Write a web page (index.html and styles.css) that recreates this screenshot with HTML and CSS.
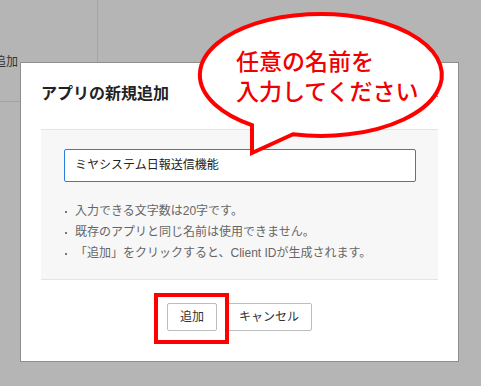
FILE: index.html
```html
<!DOCTYPE html>
<html lang="ja">
<head>
<meta charset="utf-8">
<title>アプリの新規追加</title>
<link rel="stylesheet" href="styles.css">
</head>
<body>
<div class="page">
  <div class="cell cell-side"><span class="side-label">追加</span></div>
  <div class="cell cell-main"></div>
  <div class="cell"></div>
  <div class="cell"></div>
</div>

<div class="modal">
  <div class="modal-header">
    <h1 class="modal-title">アプリの新規追加</h1>
    <span class="modal-close">×</span>
  </div>
  <div class="modal-panel">
    <div class="field">ミヤシステム日報送信機能</div>
    <ul class="notes">
      <li>入力できる文字数は20字です。</li>
      <li>既存のアプリと同じ名前は使用できません。</li>
      <li>「追加」をクリックすると、Client IDが生成されます。</li>
    </ul>
  </div>
  <div class="modal-footer">
    <span class="btn-wrap highlighted"><button class="btn">追加</button></span>
    <button class="btn">キャンセル</button>
  </div>
</div>

<svg class="bubble" width="260" height="160" viewBox="0 0 260 160">
  <path d="M 103 134.3 A 121 61 0 1 0 62 125.1 L 62 153 Z" fill="#fff" stroke="#ff0000" stroke-width="4" stroke-linejoin="miter"/>
</svg>
<div class="bubble-text">任意の名前を<br>入力してください</div>
</body>
</html>
```

FILE: styles.css
```css
* { box-sizing: border-box; }

html, body {
  margin: 0;
  padding: 0;
}

body {
  width: 481px;
  height: 386px;
  overflow: hidden;
  background: #b5b5b5;
  font-family: "Liberation Sans", "Noto Sans CJK JP", sans-serif;
  color: #222;
  position: relative;
}

.page {
  display: grid;
  grid-template-columns: 98px 1fr;
  grid-template-rows: 102px 1fr;
  height: 386px;
}

.cell-side {
  border-right: 1px solid #a4a4a4;
  border-bottom: 1px solid #a4a4a4;
  padding-top: 53px;
  font-size: 12px;
  line-height: 18px;
  color: #333;
  overflow: hidden;
}

.side-label {
  display: inline-block;
  margin-left: -6px;
}

.modal {
  position: absolute;
  left: 20px;
  top: 62px;
  width: 439px;
  height: 300px;
  background: #fff;
  border: 1px solid #8e8e8e;
  display: flex;
  flex-direction: column;
}

.modal-header {
  display: flex;
  justify-content: space-between;
  align-items: flex-start;
  padding: 20px 20px 0 20px;
  height: 66px;
}

.modal-title {
  margin: 0;
  font-size: 16px;
  line-height: 22px;
  font-weight: bold;
  color: #222;
}

.modal-close {
  font-size: 15px;
  line-height: 22px;
  color: #555;
  margin-top: 0;
  margin-right: -1px;
}

.modal-panel {
  margin: 0 20px;
  background: #f7f7f7;
  border-top: 1px solid #e4e4e4;
  border-bottom: 1px solid #e4e4e4;
  padding: 19px 22px 15px 23px;
}

.field {
  height: 33px;
  border: 1px solid #2a7de1;
  border-radius: 2px;
  background: #fff;
  padding: 0 10px;
  font-size: 12px;
  line-height: 31px;
  color: #222;
}

.notes {
  list-style: none;
  margin: 19px 0 0 0;
  padding: 0;
  font-size: 12px;
  line-height: 21px;
  color: #666;
}

.notes li {
  display: flex;
  align-items: center;
}

.notes li::before {
  content: "";
  width: 2px;
  height: 2px;
  background: #777;
  margin: 0 8px 0 1px;
  flex: none;
}

.modal-footer {
  display: flex;
  justify-content: center;
  align-items: flex-start;
  gap: 9px;
  padding-top: 23px;
}

.btn {
  height: 28px;
  padding: 0 12px;
  background: #fff;
  border: 1px solid #bdbdbd;
  border-radius: 2px;
  font-family: "Liberation Sans", "Noto Sans CJK JP", sans-serif;
  font-size: 12px;
  color: #333;
  line-height: 26px;
}

.btn-wrap {
  display: inline-block;
  position: relative;
}

.btn-wrap .btn {
  width: 50px;
  padding: 0;
}

.highlighted::after {
  content: "";
  position: absolute;
  left: -13px;
  right: -12px;
  top: -10px;
  bottom: -13px;
  border: 4px solid #ff0000;
  pointer-events: none;
}

.bubble {
  position: absolute;
  left: 190px;
  top: 0;
}

.bubble-text {
  position: absolute;
  left: 236px;
  top: 45px;
  font-family: "Noto Sans CJK JP", sans-serif;
  font-size: 23px;
  line-height: 30px;
  font-weight: 500;
  color: #f00000;
  white-space: nowrap;
}
```
